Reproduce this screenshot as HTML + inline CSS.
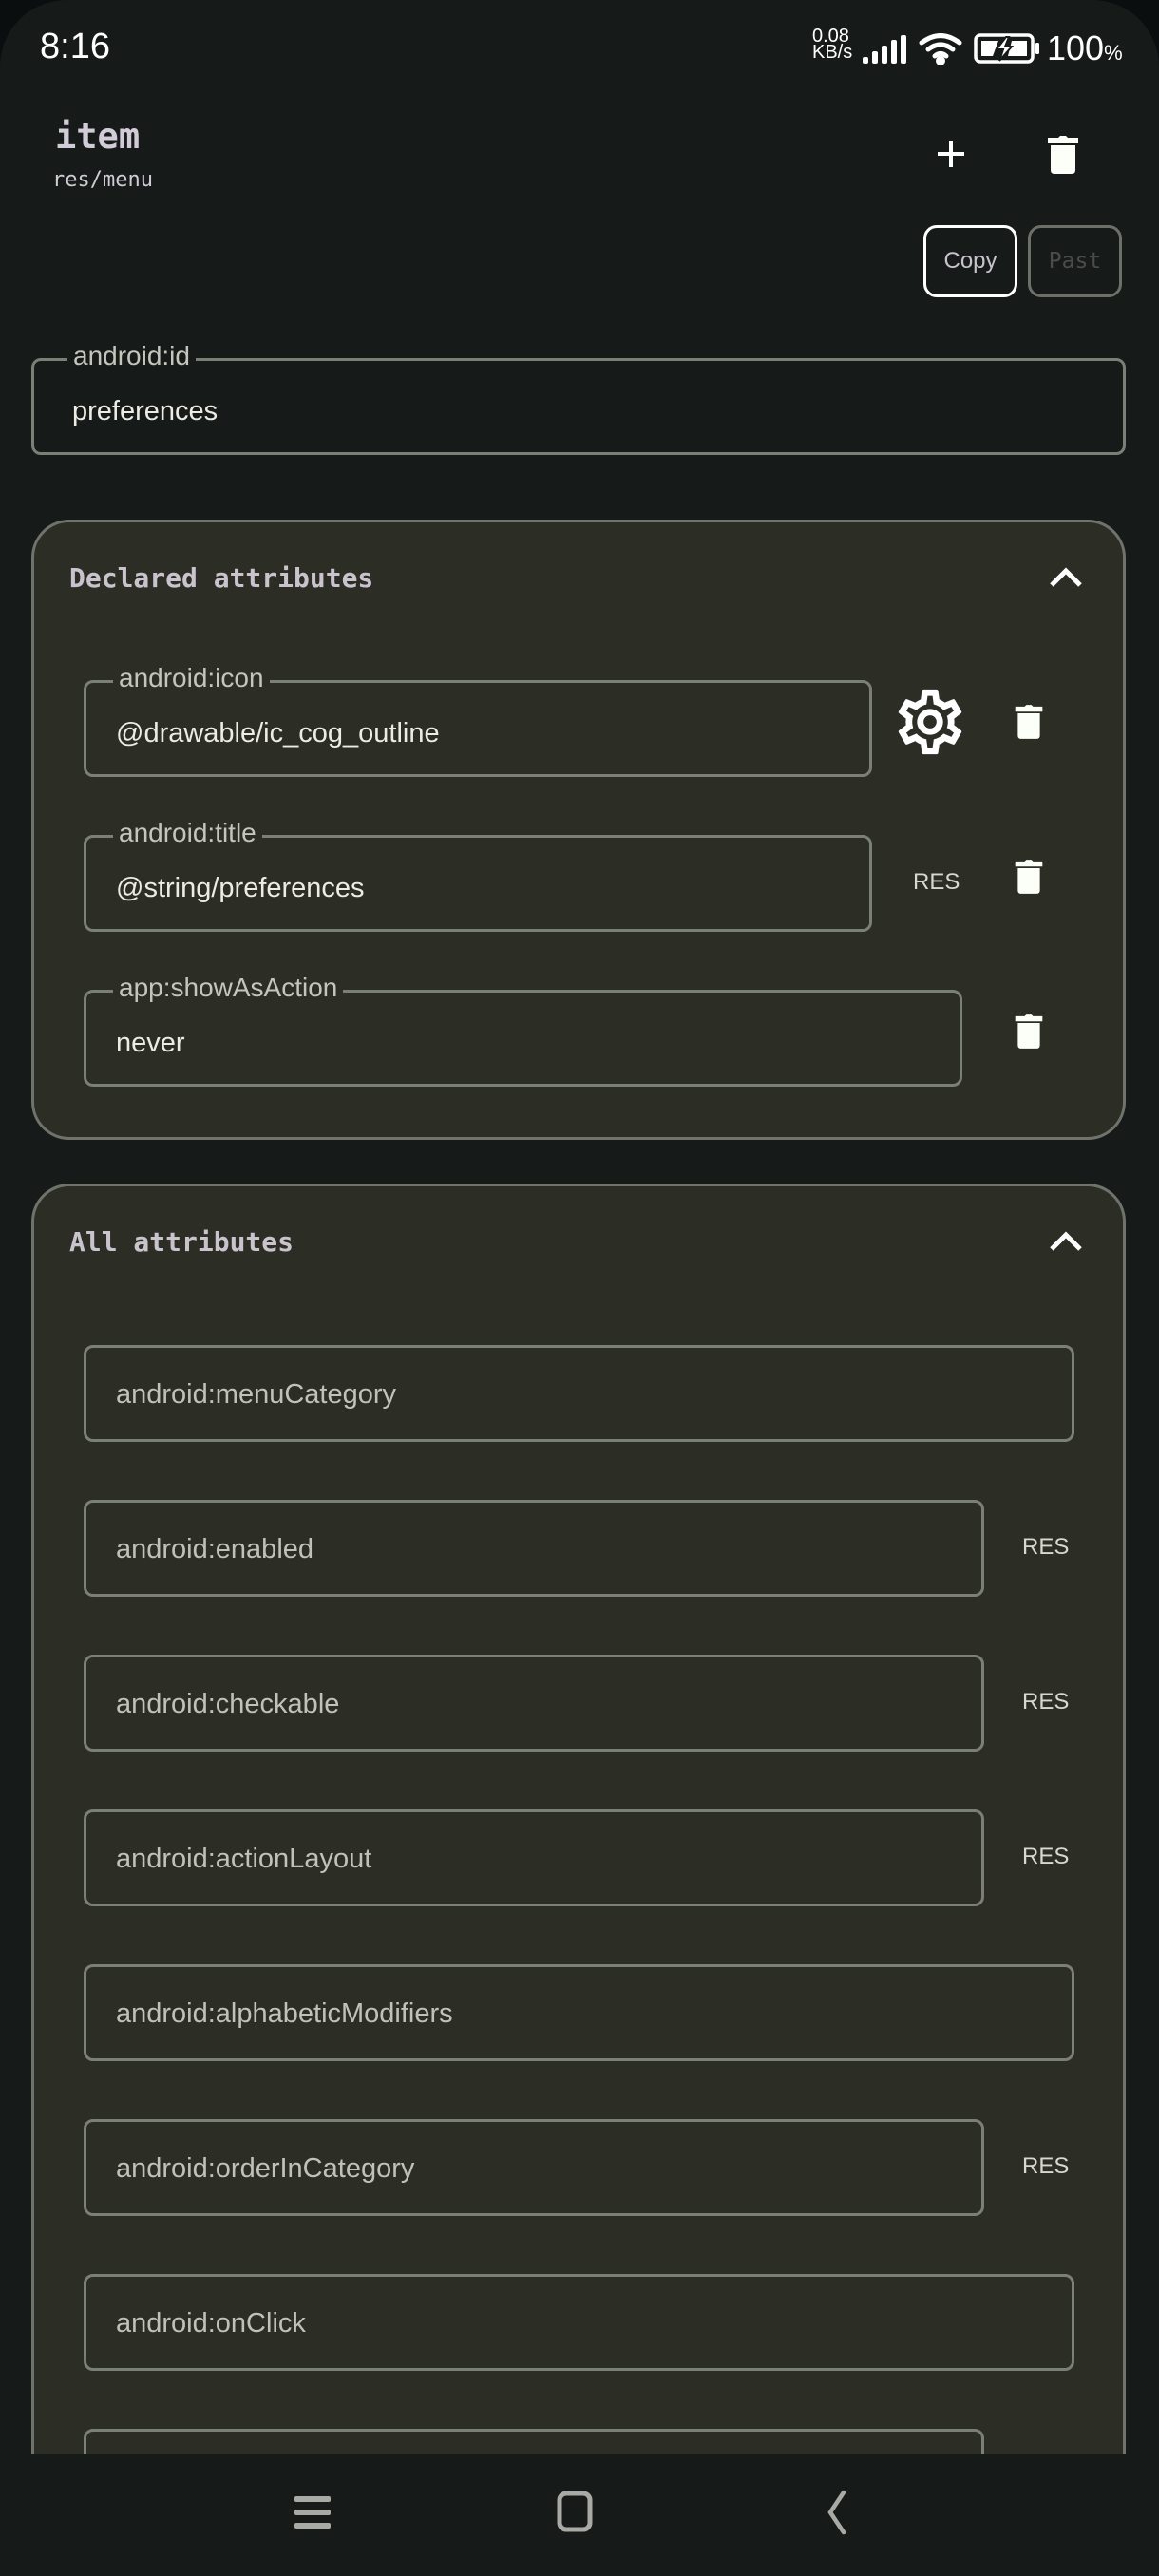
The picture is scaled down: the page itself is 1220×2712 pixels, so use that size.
<!DOCTYPE html>
<html><head><meta charset="utf-8"><style>
*{margin:0;padding:0;box-sizing:border-box}
html,body{width:1220px;height:2712px;overflow:hidden}
body{background:#0a0e0e;position:relative;font-family:"Liberation Sans",sans-serif}
.screen{position:absolute;left:0;top:0;width:1220px;height:2712px;background:#161b1a;border-radius:70px 70px 0 0;overflow:hidden}
.abs{position:absolute}
.mono{font-family:"DejaVu Sans Mono","Liberation Mono",monospace}
.card{position:absolute;left:33px;width:1152px;background:#2c2d25;border:3px solid #6f736b;border-radius:40px}
.fld{position:absolute;border:3px solid #7b8077;border-radius:10px;height:102px}
.fld .lab{position:absolute;left:28px;top:-20px;background:#2c2d25;padding:0 6px;font-size:28px;color:#c4c6bc;line-height:30px}
.fld .val{position:absolute;left:31px;top:36px;font-size:29px;color:#ecece4;line-height:34px}
.fld .ph{position:absolute;left:31px;top:32px;font-size:29px;color:#c0c2b8;line-height:34px}
.res{position:absolute;font-size:24px;color:#d8d8d0}
.ctitle{position:absolute;left:37px;font-size:28px;font-weight:bold;color:#c9c3cd}
</style></head><body>
<div class="screen">
<!-- status bar -->
<div class="abs" style="left:42px;top:28px;font-size:38px;color:#fff;">8:16</div>
<div class="abs" style="left:855px;top:30px;font-size:20px;color:#fff;line-height:17px;">0.08<br>KB/s</div>
<svg class="abs" style="left:906px;top:36px" width="50" height="32" viewBox="0 0 50 32">
<rect x="2" y="24" width="6" height="7" rx="2" fill="#fff"/><rect x="12" y="18" width="6" height="13" rx="2" fill="#fff"/><rect x="22" y="12" width="6" height="19" rx="2" fill="#fff"/><rect x="32" y="6" width="6" height="25" rx="2" fill="#fff"/><rect x="42" y="1" width="6" height="30" rx="2" fill="#fff"/></svg>
<svg class="abs" style="left:966px;top:34px" width="48" height="34" viewBox="0 0 48 34" fill="none" stroke="#fff" stroke-width="5" stroke-linecap="round">
<path d="M4 11 Q24 -4 44 11"/><path d="M11 18 Q24 8 37 18"/><path d="M18 25 Q24 20 30 25"/><circle cx="24" cy="30" r="2.5" fill="#fff"/></svg>
<svg class="abs" style="left:1025px;top:35px" width="72" height="32" viewBox="0 0 72 32">
<rect x="2" y="2" width="60" height="28" rx="5" fill="none" stroke="#fff" stroke-width="3.5"/>
<rect x="65" y="10" width="4" height="12" rx="1.5" fill="#fff"/>
<path d="M8 8 H26 L20 24 H8Z M40 8 H56 V24 H36Z" fill="#fff"/>
<path d="M34 4 L24 17 H31 L27 29 L40 14 H33 L37 4Z" fill="#fff" stroke="#161b1a" stroke-width="2"/></svg>
<div class="abs" style="left:1102px;top:30px;font-size:36px;color:#fff;">100<span style="font-size:22px">%</span></div>

<!-- header -->
<div class="abs mono" style="left:58px;top:122px;font-size:37px;font-weight:bold;color:#d2cbd8;">item</div>
<div class="abs mono" style="left:55px;top:177px;font-size:22px;color:#d0ccd4;">res/menu</div>
<svg class="abs" style="left:984px;top:145px" width="34" height="34" viewBox="0 0 34 34"><path d="M17 3V31M3 17H31" stroke="#fff" stroke-width="4"/></svg>
<svg class="abs" style="left:1100px;top:141px" width="38" height="44" viewBox="0 0 38 44"><path d="M3 4H14L16 2H22L24 4H35V10H3Z M6 12H32V38Q32 42 28 42H10Q6 42 6 38Z" fill="#fbfff8"/></svg>
<div class="abs" style="left:972px;top:237px;width:99px;height:76px;border:3px solid #fff;border-radius:14px;color:#c8c2cc;font-size:24px;text-align:center;line-height:70px;">Copy</div>
<div class="abs mono" style="left:1082px;top:237px;width:99px;height:76px;border:3px solid #6c7068;border-radius:14px;color:#4a4c48;font-size:23px;text-align:center;line-height:70px;">Past</div>

<!-- android:id -->
<div class="fld" style="left:33px;top:377px;width:1152px;">
<div class="lab" style="background:#161b1a;left:35px;">android:id</div>
<div class="val" style="left:40px;">preferences</div></div>

<!-- Declared card -->
<div class="card" style="top:547px;height:653px;">
<div class="ctitle mono" style="top:42px;">Declared attributes</div>
<svg class="abs" style="left:1066px;top:44px" width="40" height="28" viewBox="0 0 40 28"><path d="M5 22L20 7L35 22" fill="none" stroke="#fff" stroke-width="5"/></svg>
</div>
<div class="fld" style="left:88px;top:716px;width:830px;"><div class="lab">android:icon</div><div class="val">@drawable/ic_cog_outline</div></div>
<svg class="abs" style="left:938px;top:718px" width="82" height="84" viewBox="0 0 24 24"><path fill="#fff" d="M12,8A4,4 0 0,1 16,12A4,4 0 0,1 12,16A4,4 0 0,1 8,12A4,4 0 0,1 12,8M12,10A2,2 0 0,0 10,12A2,2 0 0,0 12,14A2,2 0 0,0 14,12A2,2 0 0,0 12,10M10,22C9.750,22 9.54,21.820 9.5,21.58L9.13,18.93C8.5,18.68 7.96,18.34 7.44,17.94L4.95,18.95C4.73,19.03 4.46,18.95 4.34,18.73L2.34,15.27C2.21,15.05 2.27,14.78 2.46,14.63L4.57,12.97L4.5,12L4.57,11L2.46,9.37C2.27,9.22 2.21,8.95 2.34,8.73L4.34,5.27C4.46,5.05 4.73,4.96 4.95,5.05L7.44,6.05C7.96,5.66 8.5,5.32 9.13,5.07L9.5,2.42C9.54,2.18 9.75,2 10,2H14C14.25,2 14.46,2.18 14.5,2.42L14.87,5.07C15.5,5.32 16.04,5.66 16.56,6.05L19.05,5.05C19.27,4.96 19.54,5.05 19.66,5.27L21.66,8.73C21.79,8.95 21.73,9.22 21.54,9.37L19.43,11L19.5,12L19.43,13L21.54,14.63C21.73,14.78 21.79,15.05 21.66,15.27L19.66,18.73C19.54,18.95 19.27,19.04 19.05,18.95L16.56,17.950C16.04,18.34 15.5,18.68 14.87,18.93L14.5,21.58C14.46,21.82 14.25,22 14,22H10M11.25,4L10.88,6.61C9.68,6.86 8.62,7.5 7.85,8.39L5.44,7.35L4.69,8.65L6.8,10.2C6.4,11.37 6.4,12.64 6.8,13.8L4.68,15.36L5.43,16.66L7.86,15.62C8.63,16.5 9.68,17.14 10.87,17.38L11.24,20H12.76L13.13,17.39C14.32,17.14 15.37,16.5 16.14,15.62L18.57,16.66L19.32,15.36L17.2,13.81C17.6,12.64 17.6,11.37 17.2,10.2L19.31,8.65L18.56,7.35L16.15,8.39C15.38,7.5 14.32,6.86 13.12,6.62L12.75,4H11.25Z"/></svg>
<div class="fld" style="left:88px;top:879px;width:830px;"><div class="lab">android:title</div><div class="val">@string/preferences</div></div>
<div class="res" style="left:961px;top:915px;">RES</div>
<div class="fld" style="left:88px;top:1042px;width:925px;"><div class="lab">app:showAsAction</div><div class="val">never</div></div>
<svg class="abs" style="left:1066px;top:739px" width="34" height="42" viewBox="0 0 38 44"><path d="M3 4H14L16 2H22L24 4H35V10H3Z M6 12H32V38Q32 42 28 42H10Q6 42 6 38Z" fill="#fbfff8"/></svg>
<svg class="abs" style="left:1066px;top:902px" width="34" height="42" viewBox="0 0 38 44"><path d="M3 4H14L16 2H22L24 4H35V10H3Z M6 12H32V38Q32 42 28 42H10Q6 42 6 38Z" fill="#fbfff8"/></svg>
<svg class="abs" style="left:1066px;top:1065px" width="34" height="42" viewBox="0 0 38 44"><path d="M3 4H14L16 2H22L24 4H35V10H3Z M6 12H32V38Q32 42 28 42H10Q6 42 6 38Z" fill="#fbfff8"/></svg>

<!-- All attributes -->
<div class="card" style="top:1246px;height:1400px;border-bottom:none;border-radius:40px 40px 0 0;">
<div class="ctitle mono" style="top:42px;">All attributes</div>
<svg class="abs" style="left:1066px;top:44px" width="40" height="28" viewBox="0 0 40 28"><path d="M5 22L20 7L35 22" fill="none" stroke="#fff" stroke-width="5"/></svg>
</div>
<div class="fld" style="left:88px;top:1416px;width:1043px;"><div class="ph">android:menuCategory</div></div>
<div class="fld" style="left:88px;top:1579px;width:948px;"><div class="ph">android:enabled</div></div>
<div class="res" style="left:1076px;top:1615px;">RES</div>
<div class="fld" style="left:88px;top:1742px;width:948px;"><div class="ph">android:checkable</div></div>
<div class="res" style="left:1076px;top:1778px;">RES</div>
<div class="fld" style="left:88px;top:1905px;width:948px;"><div class="ph">android:actionLayout</div></div>
<div class="res" style="left:1076px;top:1941px;">RES</div>
<div class="fld" style="left:88px;top:2068px;width:1043px;"><div class="ph">android:alphabeticModifiers</div></div>
<div class="fld" style="left:88px;top:2231px;width:948px;"><div class="ph">android:orderInCategory</div></div>
<div class="res" style="left:1076px;top:2267px;">RES</div>
<div class="fld" style="left:88px;top:2394px;width:1043px;"><div class="ph">android:onClick</div></div>
<div class="fld" style="left:88px;top:2557px;width:948px;"></div>

<!-- nav bar -->
<div class="abs" style="left:0;top:2584px;width:1220px;height:200px;background:#161b1a;z-index:5;"></div>
<svg class="abs" style="left:306px;top:2624px;z-index:6" width="46" height="42" viewBox="0 0 46 42"><rect x="4" y="4" width="38" height="6" rx="2" fill="#a8aaa6"/><rect x="4" y="18" width="38" height="6" rx="2" fill="#a8aaa6"/><rect x="4" y="32" width="38" height="6" rx="2" fill="#a8aaa6"/></svg>
<svg class="abs" style="left:584px;top:2620px;z-index:6" width="42" height="48" viewBox="0 0 42 48"><rect x="5" y="5" width="32" height="38" rx="7" fill="none" stroke="#a8aaa6" stroke-width="5"/></svg>
<svg class="abs" style="left:862px;top:2620px;z-index:6" width="36" height="50" viewBox="0 0 36 50"><path d="M26 4L12 25L26 46" fill="none" stroke="#a8aaa6" stroke-width="4.5" stroke-linecap="round"/></svg>
</div>
</body></html>
